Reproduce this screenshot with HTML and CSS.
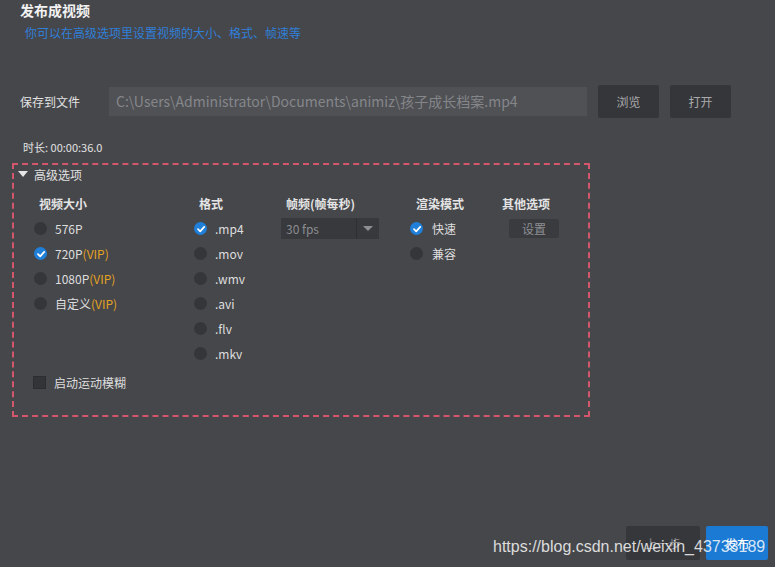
FILE: index.html
```html
<!DOCTYPE html>
<html lang="zh">
<head>
<meta charset="utf-8">
<link rel="stylesheet" href="styles.css">
</head>
<body>
<div class="page">
  <div class="header">
    <div class="title">发布成视频</div>
    <div class="subtitle">你可以在高级选项里设置视频的大小、格式、帧速等</div>
  </div>

  <div class="save-row">
    <span class="save-label">保存到文件</span>
    <div class="path-input">C:\Users\Administrator\Documents\animiz\孩子成长档案.mp4</div>
    <button class="btn-dark">浏览</button>
    <button class="btn-dark">打开</button>
  </div>

  <div class="duration">时长: 00:00:36.0</div>

  <div class="advanced">
    <div class="adv-toggle"><span class="tri"></span>高级选项</div>
    <div class="cols">
      <div class="col col1">
        <div class="col-head">视频大小</div>
        <div class="opt"><span class="radio"></span>576P</div>
        <div class="opt"><span class="radio checked"><svg viewBox="0 0 12 12"><path d="M3 6.2 L5.2 8.3 L9.2 3.9" fill="none" stroke="#fff" stroke-width="1.8" stroke-linecap="round" stroke-linejoin="round"/></svg></span>720P<span class="vip">(VIP)</span></div>
        <div class="opt"><span class="radio"></span>1080P<span class="vip">(VIP)</span></div>
        <div class="opt"><span class="radio"></span>自定义<span class="vip">(VIP)</span></div>
      </div>
      <div class="col col2">
        <div class="col-head">格式</div>
        <div class="opt"><span class="radio checked"><svg viewBox="0 0 12 12"><path d="M3 6.2 L5.2 8.3 L9.2 3.9" fill="none" stroke="#fff" stroke-width="1.8" stroke-linecap="round" stroke-linejoin="round"/></svg></span>.mp4</div>
        <div class="opt"><span class="radio"></span>.mov</div>
        <div class="opt"><span class="radio"></span>.wmv</div>
        <div class="opt"><span class="radio"></span>.avi</div>
        <div class="opt"><span class="radio"></span>.flv</div>
        <div class="opt"><span class="radio"></span>.mkv</div>
      </div>
      <div class="col col3">
        <div class="col-head">帧频(帧每秒)</div>
        <div class="select">
          <span class="select-val">30 fps</span>
          <span class="select-arrow"><span class="arrow-tri"></span></span>
        </div>
      </div>
      <div class="col col4">
        <div class="col-head">渲染模式</div>
        <div class="opt"><span class="radio checked"><svg viewBox="0 0 12 12"><path d="M3 6.2 L5.2 8.3 L9.2 3.9" fill="none" stroke="#fff" stroke-width="1.8" stroke-linecap="round" stroke-linejoin="round"/></svg></span>快速</div>
        <div class="opt"><span class="radio"></span>兼容</div>
      </div>
      <div class="col col5">
        <div class="col-head">其他选项</div>
        <button class="btn-set">设置</button>
      </div>
    </div>
    <div class="check-row"><span class="checkbox"></span>启动运动模糊</div>
  </div>

  <div class="footer">
    <button class="btn-prev">上一步</button>
    <button class="btn-publish">发布</button>
  </div>

  <div class="watermark">https://blog.csdn.net/weixin_43733189</div>
</div>
</body>
</html>
```

FILE: styles.css
```css
* { box-sizing: border-box; }

html, body {
  margin: 0;
  padding: 0;
  background: #46474b;
}

body {
  font-family: "Noto Sans CJK SC", "Noto Sans", sans-serif;
  color: #dcdcdc;
  font-size: 12px;
}

.page {
  position: relative;
  width: 775px;
  height: 567px;
  display: flex;
  flex-direction: column;
  overflow: hidden;
}

button {
  font-family: inherit;
  border: none;
  cursor: default;
}

.header {
  padding: 0 0 0 20px;
}

.title {
  font-size: 14px;
  font-weight: bold;
  color: #f2f2f2;
  line-height: 20px;
}

.subtitle {
  margin-top: 5px;
  padding-left: 5px;
  font-size: 12px;
  line-height: 16px;
  color: #2f7fd9;
}

.save-row {
  display: flex;
  align-items: center;
  margin-top: 44px;
  padding-left: 20px;
  height: 33px;
}

.save-label {
  width: 89px;
  font-size: 12px;
  color: #e2e2e2;
}

.path-input {
  width: 478px;
  height: 29px;
  background: #505155;
  color: #85868a;
  font-size: 14px;
  line-height: 29px;
  padding-left: 7px;
  white-space: nowrap;
  overflow: hidden;
}

.btn-dark {
  margin-left: 11px;
  width: 61px;
  height: 33px;
  background: #35363a;
  color: #a9a9ab;
  font-size: 12px;
  border-radius: 2px;
}

.duration {
  margin-top: 21px;
  padding-left: 23px;
  font-size: 11px;
  line-height: 16px;
  color: #e2e2e2;
}

.advanced {
  margin: 8px 0 0 12px;
  width: 578px;
  height: 254px;
  flex: none;
  border: 2px dashed #d4566c;
  padding: 0 0 0 20px;
}

.adv-toggle {
  position: relative;
  margin-left: -16px;
  padding-left: 16px;
  margin-top: 1px;
  height: 18px;
  line-height: 18px;
  font-size: 12px;
  color: #e0e0e0;
  display: flex;
  align-items: center;
}

.tri {
  position: absolute;
  left: 0;
  top: 5px;
  width: 0;
  height: 0;
  border-left: 5px solid transparent;
  border-right: 5px solid transparent;
  border-top: 6px solid #e6e6e6;
}

.cols {
  display: flex;
  margin-top: 8px;
}

.col { flex: none; }

.col-head {
  height: 24px;
  line-height: 24px;
  font-weight: bold;
  font-size: 12px;
  color: #e4e4e4;
  padding-left: 5px;
  white-space: nowrap;
}

.col1 { width: 160px; }
.col2 { width: 87px; }
.col3 { width: 129px; }
.col4 { width: 86px; }
.col4 .col-head { padding-left: 6px; }
.col5 { width: 80px; }
.col5 .col-head { padding-left: 6px; }

.opt {
  display: flex;
  align-items: center;
  height: 25px;
  font-size: 12px;
  color: #dedede;
}

.radio {
  width: 13px;
  height: 13px;
  border-radius: 50%;
  background: #35363a;
  margin-right: 8px;
  display: inline-flex;
  align-items: center;
  justify-content: center;
  flex: none;
}

.radio.checked {
  background: #1f7fd9;
}

.radio svg {
  width: 12px;
  height: 12px;
}

.col4 .radio { margin-right: 9px; }

.vip {
  color: #e4a21e;
}

.select {
  display: flex;
  width: 98px;
  height: 21px;
  background: #38393d;
  margin-top: 2px;
}

.select-val {
  flex: 1;
  padding-left: 5px;
  line-height: 21px;
  font-size: 12px;
  color: #8b8c90;
}

.select-arrow {
  width: 23px;
  border-left: 1px solid #2e2f32;
  display: flex;
  align-items: center;
  justify-content: center;
}

.arrow-tri {
  width: 0;
  height: 0;
  border-left: 5px solid transparent;
  border-right: 5px solid transparent;
  border-top: 5px solid #8e8f93;
}

.btn-set {
  margin: 3px 0 0 13px;
  width: 50px;
  height: 19px;
  background: #3a3b3f;
  color: #8e8f93;
  font-size: 12px;
  line-height: 19px;
  padding: 0;
  border-radius: 2px;
}

.check-row {
  display: flex;
  align-items: center;
  margin-top: 7px;
  font-size: 12px;
  color: #dedede;
  height: 18px;
}

.checkbox {
  width: 13px;
  height: 13px;
  background: #333438;
  border: 1px solid #2c2d30;
  margin: 0 8px 0 -1px;
}

.footer {
  margin-top: auto;
  display: flex;
  justify-content: flex-end;
  gap: 6px;
  padding: 0 7px 7px 0;
}

.btn-prev {
  width: 74px;
  height: 34px;
  background: #36373b;
  color: #8d8e92;
  font-size: 12px;
  border-radius: 2px;
}

.btn-publish {
  width: 62px;
  height: 34px;
  background: #1b7ad3;
  color: #ffffff;
  font-size: 12px;
  border-radius: 2px;
}

.watermark {
  position: absolute;
  left: 493px;
  top: 536px;
  font-family: "Liberation Sans", Arial, sans-serif;
  font-size: 16px;
  line-height: 22px;
  color: rgba(255, 255, 255, 0.82);
  white-space: nowrap;
  pointer-events: none;
}
```
